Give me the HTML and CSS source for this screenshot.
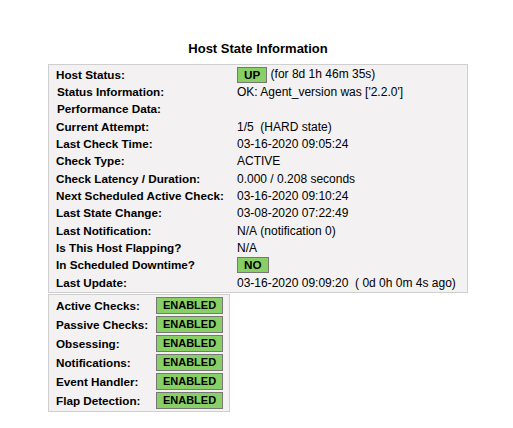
FILE: index.html
```html
<!DOCTYPE html>
<html lang="en">
<head>
<meta charset="utf-8">
<title>Host State Information</title>
<link rel="stylesheet" href="styles.css">
</head>
<body>
<div class="page">
  <div class="data-title">Host State Information</div>

  <table class="state-info">
    <tr><th>Host Status:</th><td><span class="badge state-up">UP</span> (for 8d 1h 46m 35s)</td></tr>
    <tr><th class="indent">Status Information:</th><td>OK: Agent_version was ['2.2.0']</td></tr>
    <tr><th class="indent">Performance Data:</th><td></td></tr>
    <tr><th>Current Attempt:</th><td>1/5&nbsp;&nbsp;(HARD state)</td></tr>
    <tr><th>Last Check Time:</th><td>03-16-2020 09:05:24</td></tr>
    <tr><th>Check Type:</th><td>ACTIVE</td></tr>
    <tr><th>Check Latency / Duration:</th><td>0.000&nbsp;/&nbsp;0.208 seconds</td></tr>
    <tr><th>Next Scheduled Active Check:&nbsp;&nbsp;</th><td>03-16-2020 09:10:24</td></tr>
    <tr><th>Last State Change:</th><td>03-08-2020 07:22:49</td></tr>
    <tr><th>Last Notification:</th><td>N/A&nbsp;(notification 0)</td></tr>
    <tr><th>Is This Host Flapping?</th><td>N/A</td></tr>
    <tr><th>In Scheduled Downtime?</th><td><span class="badge state-no">NO</span></td></tr>
    <tr><th>Last Update:</th><td>03-16-2020 09:09:20&nbsp;&nbsp;( 0d 0h 0m 4s ago)</td></tr>
  </table>

  <table class="checks">
    <tr><th>Active Checks:</th><td><span class="check-on">ENABLED</span></td></tr>
    <tr><th>Passive Checks:</th><td><span class="check-on">ENABLED</span></td></tr>
    <tr><th>Obsessing:</th><td><span class="check-on">ENABLED</span></td></tr>
    <tr><th>Notifications:</th><td><span class="check-on">ENABLED</span></td></tr>
    <tr><th>Event Handler:</th><td><span class="check-on">ENABLED</span></td></tr>
    <tr><th>Flap Detection:</th><td><span class="check-on">ENABLED</span></td></tr>
  </table>
</div>
</body>
</html>
```

FILE: styles.css
```css
html, body {
  margin: 0;
  padding: 0;
  background: #ffffff;
  color: #000000;
  font-family: "Liberation Sans", Arial, sans-serif;
}

.page {
  width: 420px;
  margin-left: 48px;
  padding-top: 41px;
}

.data-title {
  font-size: 13px;
  font-weight: bold;
  line-height: 16px;
  text-align: center;
  margin-bottom: 7px;
}

table {
  border-collapse: separate;
  border-spacing: 0;
  background: #f3f1f1;
  border: 1px solid #cfcfcf;
  font-size: 11.7px;
}

th {
  font-weight: bold;
  text-align: left;
  white-space: nowrap;
  padding: 0;
}

td {
  padding: 0;
  white-space: nowrap;
}

/* host state details */
.state-info {
  width: 420px;
  padding: 1px 0 1px 7px;
}

.state-info th,
.state-info td {
  height: 17.33px;
  line-height: 14px;
  vertical-align: middle;
}

.state-info td {
  font-size: 12px;
}

.state-info th {
  width: 180px;
}

.state-info th.indent {
  padding-left: 1px;
}

.badge {
  display: inline-block;
  height: 14px;
  line-height: 14px;
  padding: 0 6px;
  border: 1px solid #777777;
  background: #88d066;
  font-size: 11.7px;
  font-weight: bold;
  vertical-align: middle;
}

/* check switches */
.checks {
  width: 182px;
  margin-top: 1px;
  padding: 1px 0 1px 7px;
}

.checks th,
.checks td {
  height: 19px;
  vertical-align: middle;
}

.checks th {
  width: 100px;
}

.check-on {
  display: inline-block;
  box-sizing: border-box;
  width: 67px;
  height: 17px;
  line-height: 15px;
  border: 1px solid #777777;
  background: #88d066;
  font-size: 11px;
  font-weight: bold;
  text-align: center;
  vertical-align: middle;
}
```
